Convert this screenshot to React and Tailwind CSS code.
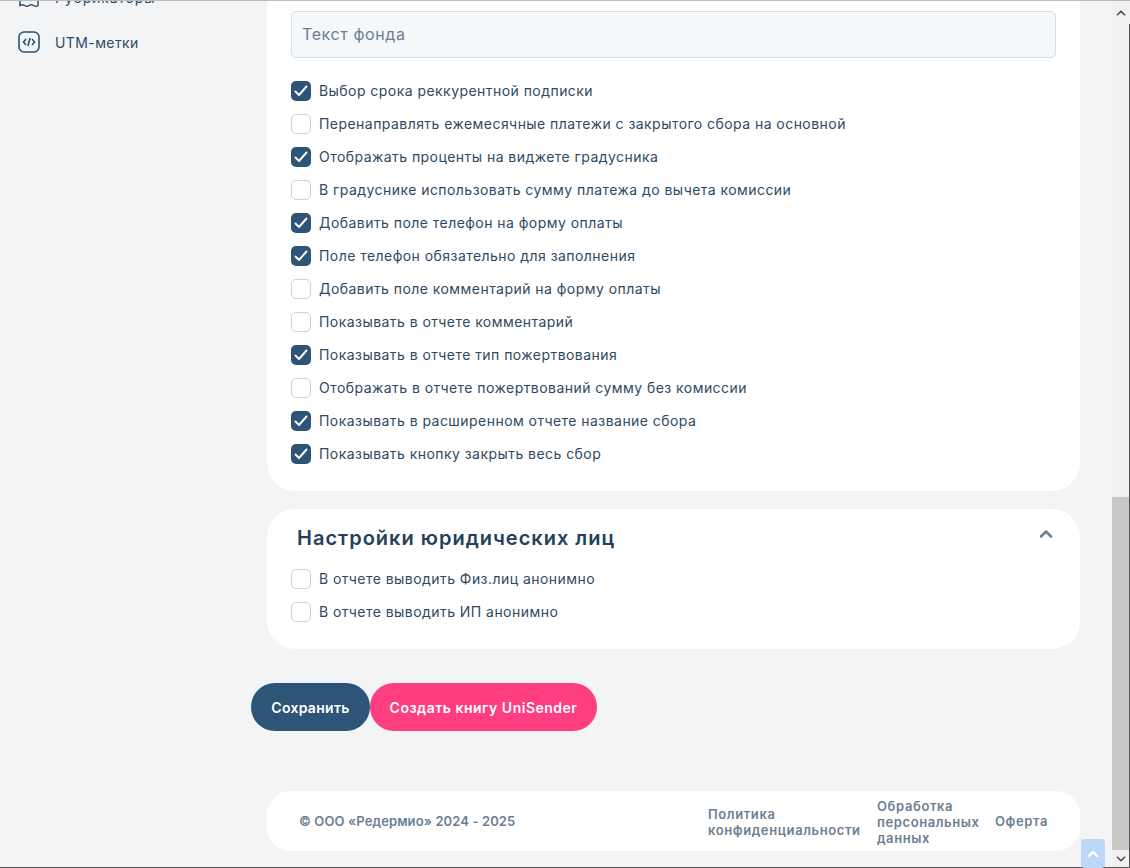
import React from "react";
import { ChevronUp, ChevronDown } from "lucide-react";
const top = [
["Выбор срока реккурентной подписки",1],["Перенаправлять ежемесячные платежи с закрытого сбора на основной",0],["Отображать проценты на виджете градусника",1],["В градуснике использовать сумму платежа до вычета комиссии",0],["Добавить поле телефон на форму оплаты",1],["Поле телефон обязательно для заполнения",1],["Добавить поле комментарий на форму оплаты",0],["Показывать в отчете комментарий",0],["Показывать в отчете тип пожертвования",1],["Отображать в отчете пожертвований сумму без комиссии",0],["Показывать в расширенном отчете название сбора",1],["Показывать кнопку закрыть весь сбор",1]];
function Row({t,c}){return <div className="flex items-center h-[33px] gap-[8px]">
<span className={c?"w-5 h-5 rounded-[5px] bg-[#2c5577] flex items-center justify-center":"w-5 h-5 rounded-[5px] bg-white border border-[#c9d0e0]"}>
{c?<svg width="16" height="16" viewBox="0 0 16 16" fill="none" stroke="white" strokeWidth="1.9" strokeLinecap="round" strokeLinejoin="round"><path d="M2.5 8.5 6 12 13.5 3.5"/></svg>:null}</span>
<span className="text-[14px] text-[#2d4a63] tracking-[0.45px]">{t}</span></div>}
export default function App(){return <div className="relative w-[1130px] h-[868px] overflow-hidden bg-[#f3f4f6] flex font-['Inter',sans-serif]">
<div className="w-[251px] shrink-0 pl-[18px] pt-[31px] relative">
<div className="absolute left-[18px] -top-[14px] flex items-center gap-[15px]"><svg width="22" height="22" viewBox="0 0 22 22" fill="none" stroke="#2c5172" strokeWidth="1.5"><path d="M2 2h18v17.5c-1.5 1-3 1-4.500 0s-3-1-4.500 0-3 1-4.500 0-3-1-4.500 0z"/></svg><span className="text-[14px] text-[#2d4a63] tracking-[0.85px]">Рубрикаторы</span></div>
<div className="flex items-center gap-[15px]"><svg width="22" height="22" viewBox="0 0 22 22" fill="none" stroke="#2c5172" strokeWidth="1.6"><rect x="1" y="1" width="20" height="20" rx="5"/><path d="M8 8 5.500 11 8 14M14 8l2.500 3-2.500 3M12 7l-2 8"/></svg><span className="text-[14px] text-[#2d4a63] tracking-[0.4px]">UTM-метки</span></div></div>
<div className="flex-1"><div className="ml-[16px] w-[813px] h-[491px] bg-white rounded-b-[28px] px-[24px] pt-[11px]">
<div className="h-[47px] bg-[#f5f8fb] border border-[#d5dde5] rounded-[5px] flex items-center px-[10px] pb-[2px] text-[16px] tracking-[0.6px] text-[#6b7f93]">Текст фонда</div>
<div className="mt-[16px]">{top.map(([t,c])=><Row key={t} t={t} c={c}/>)}</div></div>
<div className="ml-[16px] mt-[18px] w-[813px] h-[140px] bg-white rounded-[28px] px-[24px] pt-[14px]"><div className="flex justify-between items-start pl-[6px]"><span className="text-[20px] font-semibold text-[#243f59] tracking-[1px]">Настройки юридических лиц</span><ChevronUp size={20} strokeWidth={3} className="text-[#6b7f93] mt-[1px]"/></div><div className="mt-[9px]"><Row t="В отчете выводить Физ.лиц анонимно" c={0}/><Row t="В отчете выводить ИП анонимно" c={0}/></div></div>
<div className="flex mt-[34px]"><button className="h-[48px] w-[119px] rounded-full bg-[#2c5577] text-white text-[14px] font-semibold tracking-[0.3px]">Сохранить</button><button className="h-[48px] w-[227px] rounded-full bg-[#ff3d81] text-white text-[14px] font-semibold tracking-[0.5px]">Создать книгу UniSender</button></div>
<div className="ml-[16px] mt-[60px] w-[813px] h-[60px] bg-white rounded-[24px] flex items-center justify-between px-[32px] pt-[1px] text-[13px] font-semibold text-[#6b7f93]"><span className="tracking-[0.1px]">© ООО «Редермио» 2024 - 2025</span><div className="flex gap-[16px] items-center tracking-[0.6px]"><span className="w-[153px] leading-[16px]">Политика конфиденциальности</span><span className="w-[102px] leading-[16px]">Обработка персональных данных</span><span>Оферта</span></div></div></div>
<div className="w-[18px] shrink-0 bg-[#f1f1f1] flex flex-col"><div className="h-[18px] flex justify-center items-center pt-[8px]"><ChevronUp size={14} strokeWidth={3} className="text-[#505050]"/></div><div className="flex-1 flex flex-col justify-end"><div className="h-[353px] bg-[#c8c8c8]"/></div><div className="h-[18px] flex justify-center items-center"><ChevronDown size={14} strokeWidth={3} className="text-[#505050]"/></div></div>
<div className="absolute left-0 right-0 top-0 h-[1px] bg-[#bdbdbd]"/>
<div className="absolute left-0 right-0 bottom-0 h-[1px] bg-[#555]"/>
<div className="absolute right-0 top-[24px] bottom-0 w-[1px] bg-[#555]"/>
<div className="absolute right-[25px] bottom-0 w-[24px] h-[29px] rounded-[4px] bg-[#bcd7f7] flex items-center justify-center"><ChevronUp size={18} strokeWidth={3} className="text-white"/></div>
</div>}
